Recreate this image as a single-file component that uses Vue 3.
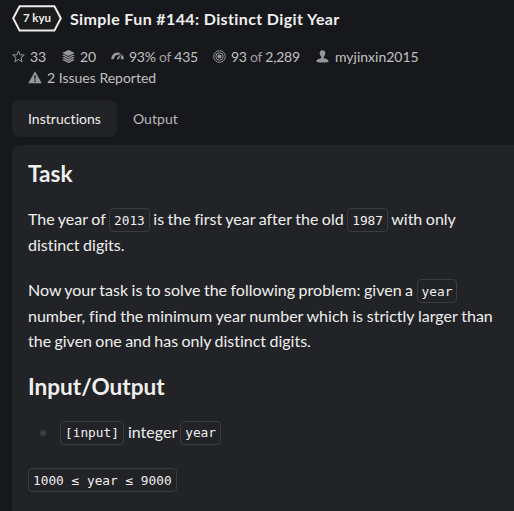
<script setup>
import { ref } from 'vue'

const tabs = ['Instructions', 'Output']
const active = ref('Instructions')
</script>

<template>
  <main class="page">
    <header class="title-row">
      <div class="rank">
        <svg class="hex" width="50" height="27" viewBox="0 0 50 27">
          <path d="M7.6 1.2H42.4L48.8 13.3L42.4 25.6H7.6L1.2 13.3Z" />
        </svg>
        <span class="rank-text">7 kyu</span>
      </div>
      <h1>Simple Fun #144: Distinct Digit Year</h1>
    </header>

    <section class="stats">
      <div class="stat stars">
        <svg width="13" height="13" viewBox="0 0 13 13">
          <path class="line" d="M6.5 .9L8 4.8L12.3 5L9 7.7L10.1 11.9L6.5 9.5L2.9 11.9L4 7.7L.7 5L5 4.8Z" />
        </svg>
        <span>33</span>
      </div>
      <div class="stat collections">
        <svg width="13" height="13" viewBox="0 0 13 13">
          <path d="M6.5 0L12.8 3L6.5 6.1L.2 3Z" />
          <path d="M.2 5.3L2 4.6L6.5 6.9L11 4.6L12.8 5.3L6.5 8.5Z" />
          <path d="M.2 7.8L2 7L6.5 9.3L11 7L12.8 7.8L6.5 10.9Z" />
          <path d="M.2 10L2 9.3L6.5 11.6L11 9.3L12.8 10L6.5 13Z" />
        </svg>
        <span>20</span>
      </div>
      <div class="stat satisfaction">
        <svg width="13" height="13" viewBox="0 0 13 13">
          <path d="M.3 9.2C.5 5 3.1 2.6 6.5 2.6C7.7 2.6 8.6 2.8 9.5 3.3L7.5 5.2C4.8 4.7 3.3 6.5 2.9 9.2Z" />
          <path d="M10.9 3L8 8.8C7.3 10 5.5 9.2 6 7.9Z" />
          <path d="M11.1 4.5C12.2 5.6 12.8 7.2 12.8 9.2H10.1C10.1 8.3 9.9 7.5 9.6 6.9Z" />
        </svg>
        <span>93% <i>of</i> 435</span>
      </div>
      <div class="stat completed">
        <svg width="13" height="13" viewBox="0 0 13 13">
          <circle class="line" cx="6.5" cy="6.5" r="5.8" />
          <circle class="line" cx="6.5" cy="6.5" r="3.7" />
          <circle cx="6.5" cy="6.5" r="2.1" />
        </svg>
        <span>93 <i>of</i> 2,289</span>
      </div>
      <div class="stat author">
        <svg width="13" height="13" viewBox="0 0 13 13">
          <path d="M6.5 .2C8.5 .2 9.5 1.5 9.3 3.3C9.2 5 8.6 5.9 7.8 6.6V8.1C8.6 9 12.4 9.1 12.6 11.2C12.5 12.2 10.2 12.6 6.5 12.6C2.8 12.6.5 12.2.4 11.2C.6 9.1 4.4 9 5.2 8.1V6.6C4.4 5.9 3.8 5 3.7 3.3C3.5 1.5 4.5 .2 6.5 .2Z" />
        </svg>
        <span>myjinxin2015</span>
      </div>
    </section>
    <div class="stat issues">
      <svg width="14" height="13" viewBox="0 0 14 13">
        <path d="M7 .3L13.8 12.3H.2Z" />
        <path class="mark" d="M6.2 4.4H7.8L7.5 8.7H6.5ZM6.3 9.5H7.7V11H6.3Z" />
      </svg>
      <span>2 Issues Reported</span>
    </div>

    <nav class="tabs">
      <button v-for="tab in tabs" :key="tab" :class="{ active: active === tab }" @click="active = tab">{{ tab }}</button>
    </nav>

    <article class="panel">
      <h2>Task</h2>
      <p>The year of <code>2013</code> is the first year after the old <code>1987</code> with only<br>distinct digits.</p>
      <p>Now your task is to solve the following problem: given a <code>year</code><br><span class="loose">number, find the minimum year number which is strictly larger than</span><br><span class="tight">the given one and has only distinct digits.</span></p>
      <h2 class="second">Input/Output</h2>
      <ul>
        <li><code>[input]</code><span class="type">integer</span><code>year</code></li>
      </ul>
      <p><code>1000 ≤ year ≤ 9000</code></p>
    </article>
  </main>
</template>

<style>
html, body { margin: 0; background: #17181b; overflow: hidden; }
</style>

<style scoped>
.page {
  box-sizing: border-box;
  width: 514px;
  height: 511px;
  padding: 5px 0 0 12px;
  overflow: hidden;
  display: flex;
  flex-direction: column;
  background: #17181b;
  color: #efefef;
  font-family: Lato, sans-serif;
  font-size: 16px;
  font-variant-ligatures: none;
}
.title-row { display: flex; align-items: center; gap: 8px; height: 27px; }
.rank { display: grid; place-items: center; width: 50px; height: 27px; }
.hex, .rank-text { grid-area: 1 / 1; }
.hex path { fill: #1b1b1b; stroke: #ececec; stroke-width: 2; }
.rank-text { font-size: 11.5px; font-weight: 700; line-height: 25px; padding-bottom: 2px; }
h1 { margin: 0; font-size: 16px; letter-spacing: .38px; font-weight: 700; line-height: 28px; white-space: nowrap; }
.stats { display: flex; height: 21px; margin-top: 14px; }
.stat { display: flex; align-items: center; gap: 5px; font-size: 14px; line-height: 21px; color: #c0c1c2; white-space: nowrap; }
.stat > * { flex: none; }
.stat svg { fill: #96979a; margin-bottom: 1px; }
.stat i { font-style: normal; color: #9d9ea0; }
.line { fill: none; stroke: #96979a; stroke-width: 1; }
.mark { fill: #17181b; }
.stars { width: 50px; }
.collections { width: 49px; }
.satisfaction { width: 102px; letter-spacing: -.3px; }
.stat.satisfaction, .stat.completed { letter-spacing: -.25px; }
.completed { width: 103px; }
.author { gap: 6px; }
.issues { height: 21px; margin-left: 16px; }
.tabs { display: flex; height: 37px; margin-top: 12px; }
.tabs button {
  border: 0;
  padding: 0 16px;
  border-radius: 8px;
  background: transparent;
  color: #b8b9ba;
  font: 14px/37px Lato, sans-serif;
  font-variant-ligatures: none;
  letter-spacing: .04px;
}
.tabs button.active { background: #222326; color: #efefef; }
.panel { flex: 1; margin-top: 8px; padding: 16px; border-radius: 8px 0 0 0; background: #222326; white-space: nowrap; }
h2 { margin: 0 0 19px; font-size: 22.6px; line-height: 26px; font-weight: 700; }
h2.second { margin-bottom: 20px; }
p { margin: 0 0 20px; line-height: 25.5px; word-spacing: -.58px; }
.loose { word-spacing: -.3px; }
.tight { word-spacing: -.75px; }
ul { margin: 0 0 21px; padding: 0 0 0 32px; list-style: none; }
li { display: flex; align-items: center; gap: 3px; height: 26px; line-height: 25.6px; }
.type { margin-bottom: 1px; }
li .type { margin-left: 1px; }
li::before { content: ''; width: 6px; height: 6px; margin-left: -20px; margin-right: 11px; border-radius: 50%; background: #3d3e40; }
code {
  padding: 3.5px 4px;
  border: 1px solid #3b3c3f;
  border-radius: 4px;
  font: 12.8px/15px "DejaVu Sans Mono", monospace;
  word-spacing: 0;
  vertical-align: 1px;
  white-space: pre;
}
</style>
